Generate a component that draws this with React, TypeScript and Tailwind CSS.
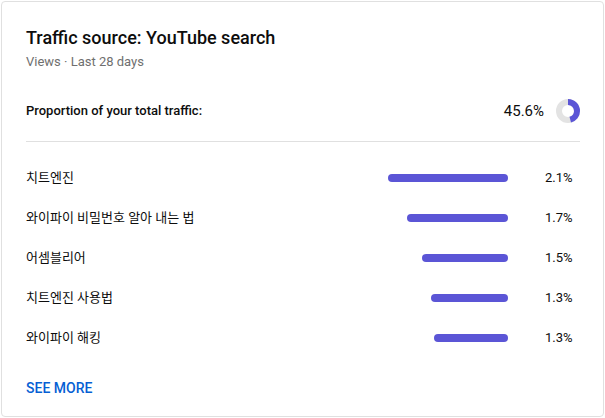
const rows = [
  { label: "치트엔진", value: "2.1%", width: 120 },
  { label: "와이파이 비밀번호 알아 내는 법", value: "1.7%", width: 101 },
  { label: "어셈블리어", value: "1.5%", width: 86 },
  { label: "치트엔진 사용법", value: "1.3%", width: 77 },
  { label: "와이파이 해킹", value: "1.3%", width: 74 },
];

function Donut({ percent }: { percent: number }) {
  const r = 9;
  const c = 2 * Math.PI * r;
  return (
    <svg width="24" height="24" viewBox="0 0 24 24" className="shrink-0">
      <circle cx="12" cy="12" r={r} fill="none" stroke="#e3e3e3" strokeWidth="6" />
      <circle
        cx="12"
        cy="12"
        r={r}
        fill="none"
        stroke="#5b55d6"
        strokeWidth="6"
        strokeDasharray={`${(c * percent) / 100} ${c}`}
        transform="rotate(-90 12 12)"
      />
    </svg>
  );
}

export default function App() {
  return (
    <div className="h-[418px] w-[605px] bg-white p-px font-['Roboto','Noto_Sans_CJK_KR',sans-serif]">
      <div className="flex h-[416px] w-[603px] flex-col rounded border border-[#e0e0e0] pl-6 pr-[23px] pt-6">
        <h2 className="text-[18px] leading-6 font-medium text-[#0d0d0d]">Traffic source: YouTube search</h2>
        <p className="mt-[2px] text-[13px] leading-5 text-[#6f6f6f]">Views · Last 28 days</p>

        <div className="mt-[27px] flex h-6 items-center justify-between">
          <p className="text-[13px] font-medium text-[#0d0d0d]">Proportion of your total traffic:</p>
          <div className="flex items-center gap-3">
            <span className="text-[15px] text-[#0d0d0d]">45.6%</span>
            <Donut percent={45.6} />
          </div>
        </div>

        <div className="mt-[18px] h-px bg-[#e0e0e0]" />

        <div className="mt-4 flex flex-col">
          {rows.map((row) => (
            <div key={row.label} className="flex h-10 items-center">
              <p className="flex-1 text-[13px] text-[#0d0d0d]">{row.label}</p>
              <div className="h-2 rounded-full bg-[#5b55d6]" style={{ width: row.width }} />
              <span className="ml-[37px] w-[35px] text-[13px] text-[#0d0d0d]">{row.value}</span>
            </div>
          ))}
        </div>

        <button className="mt-5 w-fit text-left text-[14px] leading-5 font-medium text-[#065fd4]">SEE MORE</button>
      </div>
    </div>
  );
}
